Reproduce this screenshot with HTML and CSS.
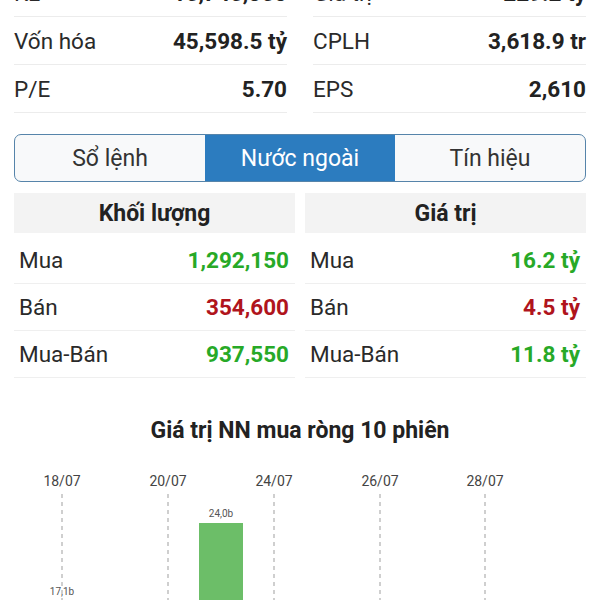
FILE: index.html
```html
<!DOCTYPE html>
<html lang="vi">
<head>
<meta charset="utf-8">
<title>Nước ngoài</title>
<link rel="stylesheet" href="styles.css">
</head>
<body>
<div class="stats">
  <div class="stat"><span class="lbl">KL</span><span class="val">15,745,350</span></div>
  <div class="stat"><span class="lbl">Giá trị</span><span class="val">229.2 tỷ</span></div>
  <div class="stat"><span class="lbl">Vốn hóa</span><span class="val">45,598.5 tỷ</span></div>
  <div class="stat"><span class="lbl">CPLH</span><span class="val">3,618.9 tr</span></div>
  <div class="stat"><span class="lbl">P/E</span><span class="val">5.70</span></div>
  <div class="stat"><span class="lbl">EPS</span><span class="val">2,610</span></div>
</div>

<div class="tabs">
  <div class="tab">Sổ lệnh</div>
  <div class="tab active">Nước ngoài</div>
  <div class="tab">Tín hiệu</div>
</div>

<div class="foreign">
  <div class="col">
    <div class="head">Khối lượng</div>
    <div class="row"><span class="lbl">Mua</span><span class="val up">1,292,150</span></div>
    <div class="row"><span class="lbl">Bán</span><span class="val down">354,600</span></div>
    <div class="row"><span class="lbl">Mua-Bán</span><span class="val up">937,550</span></div>
  </div>
  <div class="col">
    <div class="head">Giá trị</div>
    <div class="row"><span class="lbl">Mua</span><span class="val up">16.2 tỷ</span></div>
    <div class="row"><span class="lbl">Bán</span><span class="val down">4.5 tỷ</span></div>
    <div class="row"><span class="lbl">Mua-Bán</span><span class="val up">11.8 tỷ</span></div>
  </div>
</div>

<h2 class="chart-title">Giá trị NN mua ròng 10 phiên</h2>
<svg class="chart" width="600" height="160" viewBox="0 0 600 160">
  <g class="dates">
    <text x="62" y="40">18/07</text>
    <text x="168" y="40">20/07</text>
    <text x="274" y="40">24/07</text>
    <text x="380" y="40">26/07</text>
    <text x="485" y="40">28/07</text>
  </g>
  <g class="grid">
    <line x1="62" y1="48" x2="62" y2="160"/>
    <line x1="168" y1="48" x2="168" y2="160"/>
    <line x1="274" y1="48" x2="274" y2="160"/>
    <line x1="380" y1="48" x2="380" y2="160"/>
    <line x1="485" y1="48" x2="485" y2="160"/>
  </g>
  <rect class="bar" x="199" y="77" width="44" height="83"/>
  <rect class="bar faint" x="40" y="154" width="44" height="6"/>
  <g class="blabels">
    <text x="221" y="71">24,0b</text>
    <text x="62" y="149">17,1b</text>
  </g>
</svg>
</body>
</html>
```

FILE: styles.css
```css
html, body {
  margin: 0;
  padding: 0;
  background: #ffffff;
  font-family: Roboto, "Noto Sans", "Liberation Sans", sans-serif;
  color: #222222;
  overflow: hidden;
}

.stats {
  display: grid;
  grid-template-columns: 273px 273px;
  column-gap: 26px;
  padding: 0 14px;
  margin-top: -31px;
}

.stat {
  box-sizing: border-box;
  height: 48px;
  display: flex;
  align-items: center;
  justify-content: space-between;
  border-bottom: 1px solid #ececec;
  font-size: 22.5px;
}

.stat .lbl {
  color: #2a2a2a;
}

.stat .val {
  font-weight: 700;
  color: #222222;
}

.tabs {
  margin: 21px 14px 0;
  height: 48px;
  box-sizing: border-box;
  border: 1.5px solid #5684aa;
  border-radius: 7px;
  overflow: hidden;
  display: grid;
  grid-template-columns: 1fr 1fr 1fr;
  background: #f8f9fa;
}

.tab {
  display: flex;
  align-items: center;
  justify-content: center;
  font-size: 23px;
  color: #333333;
}

.tab.active {
  background: #2c7cbf;
  color: #ffffff;
}

.foreign {
  display: grid;
  grid-template-columns: 281px 281px;
  column-gap: 10px;
  padding: 0 14px;
  margin-top: 11px;
}

.head {
  height: 40px;
  background: #f3f3f3;
  display: flex;
  align-items: center;
  justify-content: center;
  font-size: 23px;
  font-weight: 700;
  color: #222222;
  margin-bottom: 4px;
}

.row {
  box-sizing: border-box;
  height: 47px;
  display: flex;
  align-items: center;
  justify-content: space-between;
  padding: 0 6px 0 5px;
  border-bottom: 1px solid #efefef;
  font-size: 22.5px;
}

.row .lbl {
  color: #2a2a2a;
}

.row .val {
  font-weight: 700;
}

.up {
  color: #27a927;
}

.down {
  color: #b0141c;
}

.chart-title {
  margin: 38px 0 0;
  height: 30px;
  line-height: 30px;
  text-align: center;
  font-size: 23px;
  font-weight: 700;
  color: #222222;
}

.chart {
  display: block;
}

.dates text {
  font-size: 14px;
  fill: #444444;
  text-anchor: middle;
  font-family: Roboto, "Liberation Sans", sans-serif;
}

.grid line {
  stroke: #b0b0b0;
  stroke-width: 1.2;
  stroke-dasharray: 4 4;
}

.bar {
  fill: #6cbe68;
}

.bar.faint {
  fill: #cfeccd;
}

.blabels text {
  font-size: 10px;
  fill: #555555;
  text-anchor: middle;
  font-family: Roboto, "Liberation Sans", sans-serif;
}
```
